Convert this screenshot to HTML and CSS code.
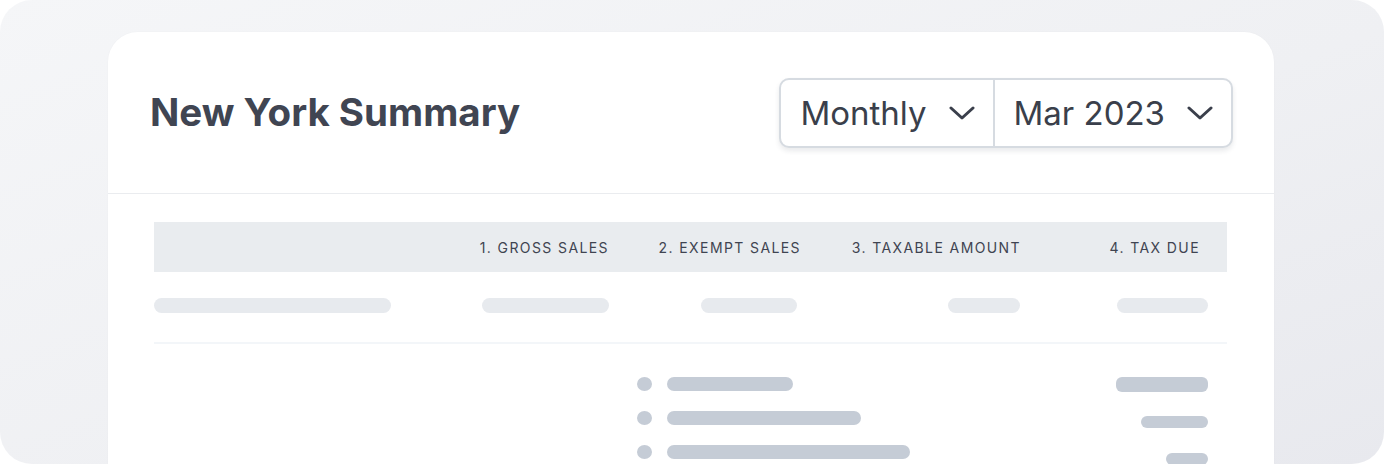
FILE: index.html
```html
<!DOCTYPE html>
<html lang="en">
<head>
<meta charset="utf-8">
<title>New York Summary</title>
<link rel="stylesheet" href="styles.css">
</head>
<body>
<div class="backdrop">
  <section class="card">
    <header class="card-header">
      <h1 class="title">New York Summary</h1>
      <div class="selects">
        <button class="select">
          <span>Monthly</span>
          <svg class="chev" width="26" height="16" viewBox="0 0 26 16"><path d="M2 3 L13 13 L24 3" fill="none" stroke="currentColor" stroke-width="3" stroke-linecap="round" stroke-linejoin="round"/></svg>
        </button>
        <button class="select">
          <span>Mar 2023</span>
          <svg class="chev" width="26" height="16" viewBox="0 0 26 16"><path d="M2 3 L13 13 L24 3" fill="none" stroke="currentColor" stroke-width="3" stroke-linecap="round" stroke-linejoin="round"/></svg>
        </button>
      </div>
    </header>
    <div class="table">
      <div class="thead">
        <div class="th"></div>
        <div class="th">1. Gross Sales</div>
        <div class="th">2. Exempt Sales</div>
        <div class="th">3. Taxable Amount</div>
        <div class="th">4. Tax Due</div>
      </div>
      <div class="skel-row">
        <div class="cell cell-left"><span class="skel" style="width:237px"></span></div>
        <div class="cell"><span class="skel" style="width:127px;margin-right:27px"></span></div>
        <div class="cell"><span class="skel" style="width:96px;margin-right:31px"></span></div>
        <div class="cell"><span class="skel" style="width:72px;margin-right:28px"></span></div>
        <div class="cell"><span class="skel" style="width:91px;margin-right:19px"></span></div>
      </div>
      <div class="details">
        <ul class="items">
          <li class="item"><span class="dot"></span><span class="bar" style="width:126px"></span></li>
          <li class="item"><span class="dot"></span><span class="bar" style="width:194px"></span></li>
          <li class="item"><span class="dot"></span><span class="bar" style="width:243px"></span></li>
        </ul>
        <div class="amounts">
          <span class="amt amt-lg" style="width:92px"></span>
          <span class="amt" style="width:67px"></span>
          <span class="amt" style="width:42px"></span>
        </div>
      </div>
    </div>
  </section>
</div>
</body>
</html>
```

FILE: styles.css
```css
* { box-sizing: border-box; }
html, body {
  margin: 0;
  padding: 0;
  background: #ffffff;
}
body {
  font-family: Inter, "Noto Sans", "Liberation Sans", sans-serif;
  width: 1384px;
  height: 464px;
  overflow: hidden;
}
.backdrop {
  width: 1384px;
  height: 464px;
  border-radius: 32px;
  background: linear-gradient(160deg, #f5f6f8 0%, #eff0f3 55%, #e8e9ee 100%);
  padding: 32px 110px 0 108px;
  overflow: hidden;
}
.card {
  background: #ffffff;
  border-radius: 30px 30px 0 0;
  height: 100%;
  box-shadow: 0 0 2px rgba(30, 40, 60, 0.03);
}
.card-header {
  display: flex;
  align-items: center;
  justify-content: space-between;
  padding: 46px 41px 45px 42px;
  border-bottom: 1px solid #eaecef;
}
.title {
  margin: 0 0 2px 0;
  font-size: 38.5px;
  font-weight: 700;
  color: #404552;
  letter-spacing: 0;
}
.selects {
  display: flex;
  height: 70px;
  border: 2px solid #d6dbe1;
  border-radius: 10px;
  box-shadow: 0 3px 5px rgba(40, 50, 70, 0.10);
  background: #fff;
}
.select {
  display: flex;
  align-items: center;
  gap: 22px;
  border: 0;
  background: transparent;
  font-family: inherit;
  font-size: 33px;
  color: #3a3f4b;
  padding: 0 18px 0 19px;
  margin: 0;
}
.select + .select {
  border-left: 2px solid #d6dbe1;
}
.chev { color: #3a3f4b; display: block; }

.table {
  padding: 28px 47px 0 46px;
}
.thead, .skel-row {
  display: grid;
  grid-template-columns: 298px 184px 192px 220px 179px;
}
.thead {
  height: 50px;
  background: #e9ecef;
  align-items: center;
}
.th {
  text-align: right;
  padding-right: 27px;
  font-size: 14px;
  text-transform: uppercase;
  letter-spacing: 1.4px;
  color: #3f4451;
}
.skel-row {
  padding: 26px 0 29px;
  border-bottom: 2px solid #f3f6f9;
}
.cell {
  display: flex;
  justify-content: flex-end;
}
.cell-left { justify-content: flex-start; }
.skel {
  display: block;
  height: 15px;
  border-radius: 8px;
  background: #e7eaee;
}
.details {
  display: flex;
  justify-content: space-between;
  padding: 33px 19px 0 482px;
}
.items {
  list-style: none;
  margin: 0;
  padding: 0;
  display: flex;
  flex-direction: column;
  gap: 20px;
}
.item {
  display: flex;
  align-items: center;
  gap: 15px;
  margin-left: 1px;
}
.dot {
  width: 15px;
  height: 14px;
  border-radius: 50%;
  background: #c5ccd6;
}
.bar {
  height: 14px;
  border-radius: 7px;
  background: #c5ccd6;
}
.amounts {
  display: flex;
  flex-direction: column;
  align-items: flex-end;
  gap: 24px;
  padding-top: 0;
}
.amt {
  display: block;
  height: 12px;
  border-radius: 6px;
  background: #c5ccd6;
}
.amt-lg { height: 15px; }
.amounts .amt + .amt + .amt { margin-top: 1px; }
```
